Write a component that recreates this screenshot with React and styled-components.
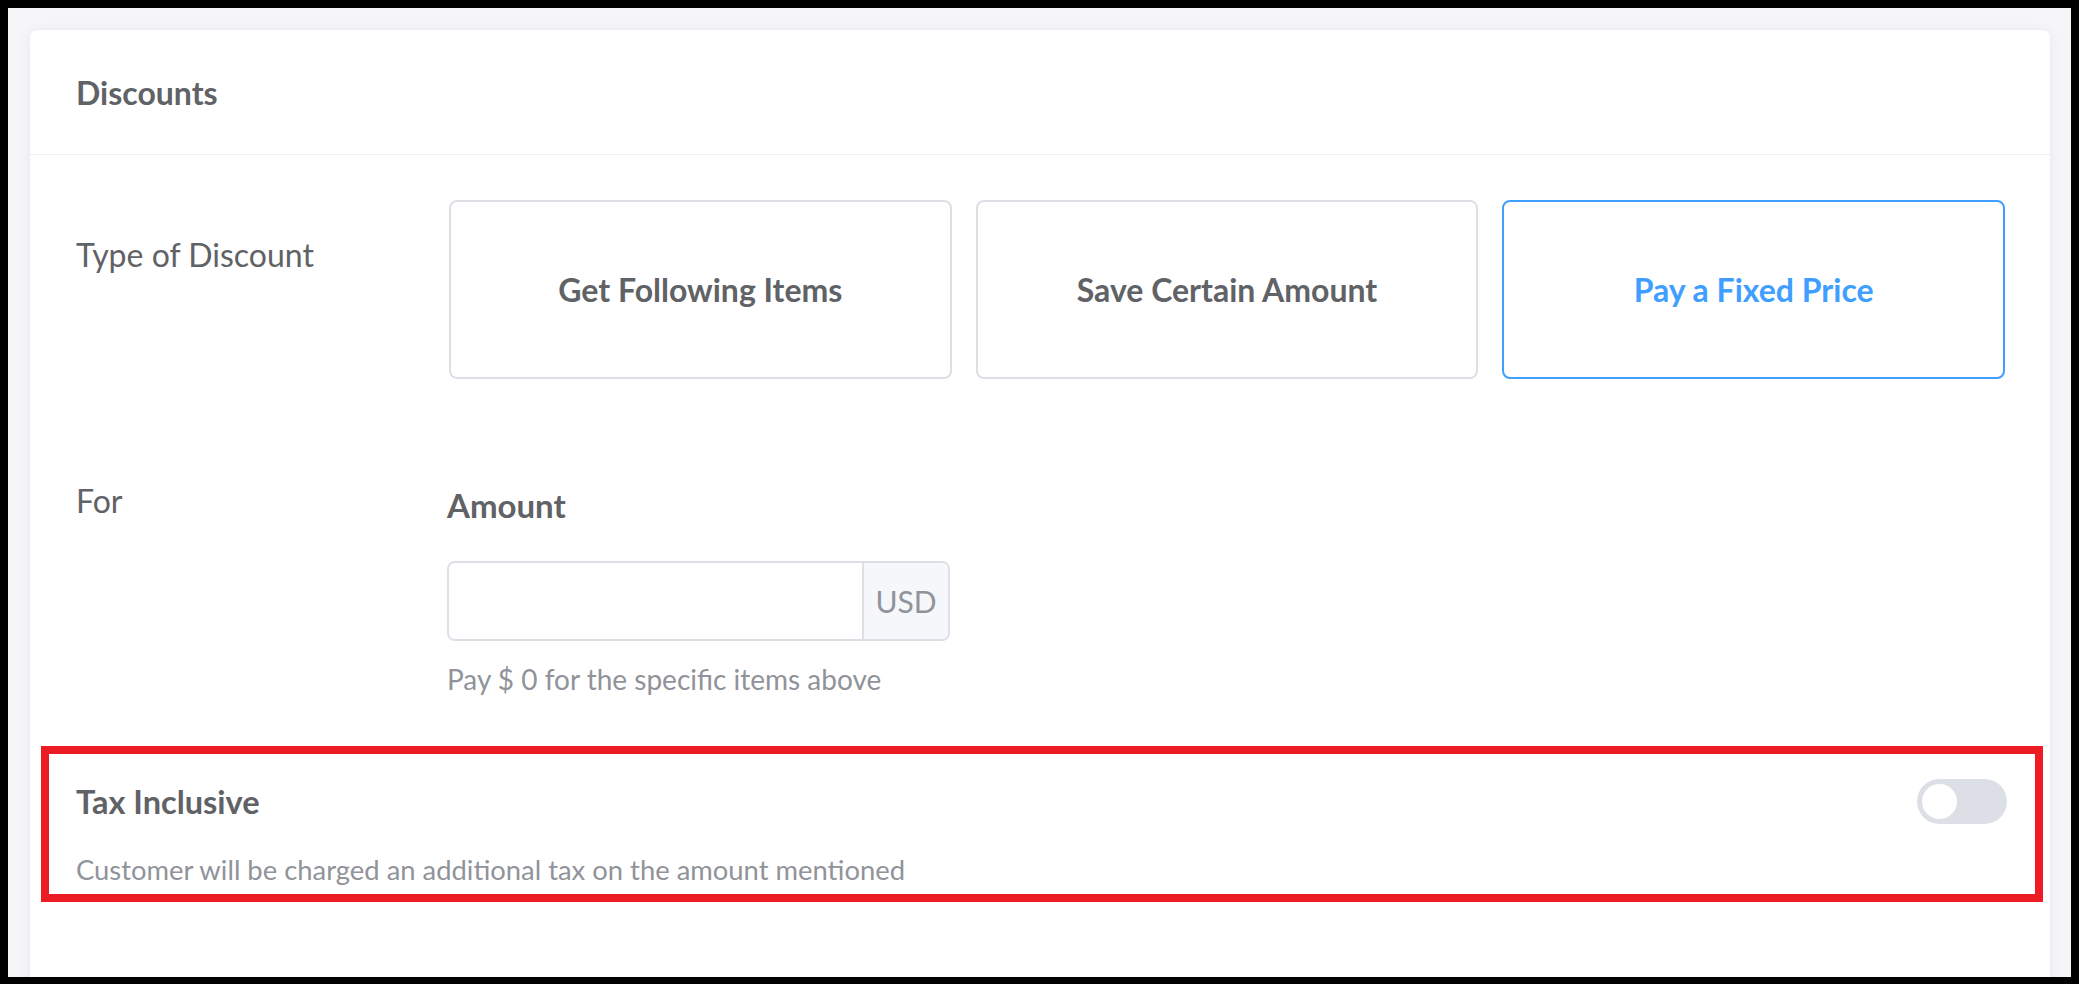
import styled, { createGlobalStyle } from "styled-components";

const GlobalStyle = createGlobalStyle`
  html, body {
    margin: 0;
    padding: 0;
    background: #000;
  }
  body {
    font-family: Lato, "Liberation Sans", sans-serif;
    color: #606266;
  }
  * { box-sizing: border-box; }
`;

const options = [
  { id: "items", text: "Get Following Items" },
  { id: "amount", text: "Save Certain Amount" },
  { id: "fixed", text: "Pay a Fixed Price" },
];

const App = () => {
  const selected = "fixed";

  return (
    <>
      <GlobalStyle />
      <Page>
        <Card>
          <Header>
            <Title>Discounts</Title>
          </Header>
          <Body>
            <Row>
              <Label offset={34}>Type of Discount</Label>
              <Options>
                {options.map((o) => (
                  <Option key={o.id} active={o.id === selected}>
                    {o.text}
                  </Option>
                ))}
              </Options>
            </Row>
            <Row top={105}>
              <Label offset={0}>For</Label>
              <Field>
                <FieldLabel>Amount</FieldLabel>
                <InputGroup>
                  <Input type="text" />
                  <Addon>USD</Addon>
                </InputGroup>
                <Help>Pay $ 0 for the specific items above</Help>
              </Field>
            </Row>
            <TaxSection>
              <TaxTop>
                <TaxTitle>Tax Inclusive</TaxTitle>
                <Switch />
              </TaxTop>
              <TaxText>
                Customer will be charged an additional tax on the amount
                mentioned
              </TaxText>
            </TaxSection>
          </Body>
        </Card>
      </Page>
    </>
  );
};

const Page = styled.div`
  margin: 8px 8px 0 8px;
  height: 969px;
  overflow: hidden;
  background: #f6f6f9;
  padding: 21px 20px 0 21px;
`;

const Card = styled.div`
  background: #fff;
  border: 1px solid #ebeef5;
  border-radius: 8px;
  box-shadow: 0 2px 14px rgba(0, 0, 0, 0.05);
  min-height: 1000px;
`;

const Header = styled.div`
  height: 125px;
  display: flex;
  align-items: center;
  padding-left: 46px;
  border-bottom: 1px solid #ebeef5;
`;

const Title = styled.h2`
  margin: 0;
  font-size: 32px;
  font-weight: 700;
  color: #606266;
`;

const Body = styled.div`
  padding: 45px 45px 0 46px;
`;

const Row = styled.div`
  display: grid;
  grid-template-columns: 373px 1fr;
  margin-top: ${({ top }) => (top ? `${top}px` : "0")};
`;

const Label = styled.div`
  font-size: 32px;
  line-height: 42px;
  padding-top: ${({ offset }) => `${offset}px`};
  margin-top: ${({ offset }) => (offset ? "0" : "-4px")};
  color: #606266;
`;

const Options = styled.div`
  display: grid;
  grid-template-columns: repeat(3, 1fr);
  gap: 24px;
`;

const Option = styled.div`
  height: 179px;
  display: flex;
  align-items: center;
  justify-content: center;
  border: 2px solid ${({ active }) => (active ? "#409eff" : "#dcdfe6")};
  border-radius: 8px;
  font-size: 32px;
  font-weight: 700;
  color: ${({ active }) => (active ? "#409eff" : "#606266")};
  cursor: pointer;
`;

const Field = styled.div`
  display: flex;
  flex-direction: column;
  align-items: flex-start;
  margin-left: -2px;
`;

const FieldLabel = styled.div`
  font-size: 33px;
  line-height: 42px;
  font-weight: 700;
`;

const InputGroup = styled.div`
  display: flex;
  width: 503px;
  height: 80px;
  margin-top: 35px;
  border: 2px solid #dcdfe6;
  border-radius: 8px;
  overflow: hidden;
`;

const Input = styled.input`
  flex: 1;
  border: none;
  outline: none;
  font-size: 28px;
  padding: 0 20px;
  font-family: inherit;
  color: #606266;
`;

const Addon = styled.div`
  width: 86px;
  display: flex;
  align-items: center;
  justify-content: center;
  background: #f5f7fa;
  border-left: 2px solid #dcdfe6;
  color: #909399;
  font-size: 30px;
`;

const Help = styled.div`
  margin-top: 20px;
  font-size: 28px;
  line-height: 36px;
  color: #909399;
`;

const TaxSection = styled.div`
  margin: 49px -38px 0 -35px;
  border: 8px solid #ed1c24;
  padding: 25px 28px 6px 27px;
`;

const TaxTop = styled.div`
  display: flex;
  align-items: center;
  justify-content: space-between;
`;

const TaxTitle = styled.div`
  font-size: 32.5px;
  line-height: 42px;
  font-weight: 700;
`;

const Switch = styled.div`
  position: relative;
  width: 90px;
  height: 45px;
  border-radius: 23px;
  background: #dcdfe6;
  &::after {
    content: "";
    position: absolute;
    top: 5px;
    left: 5px;
    width: 35px;
    height: 35px;
    border-radius: 50%;
    background: #fff;
  }
`;

const TaxText = styled.div`
  margin-top: 28px;
  font-size: 27.4px;
  line-height: 36px;
  color: #909399;
`;

export default App;
